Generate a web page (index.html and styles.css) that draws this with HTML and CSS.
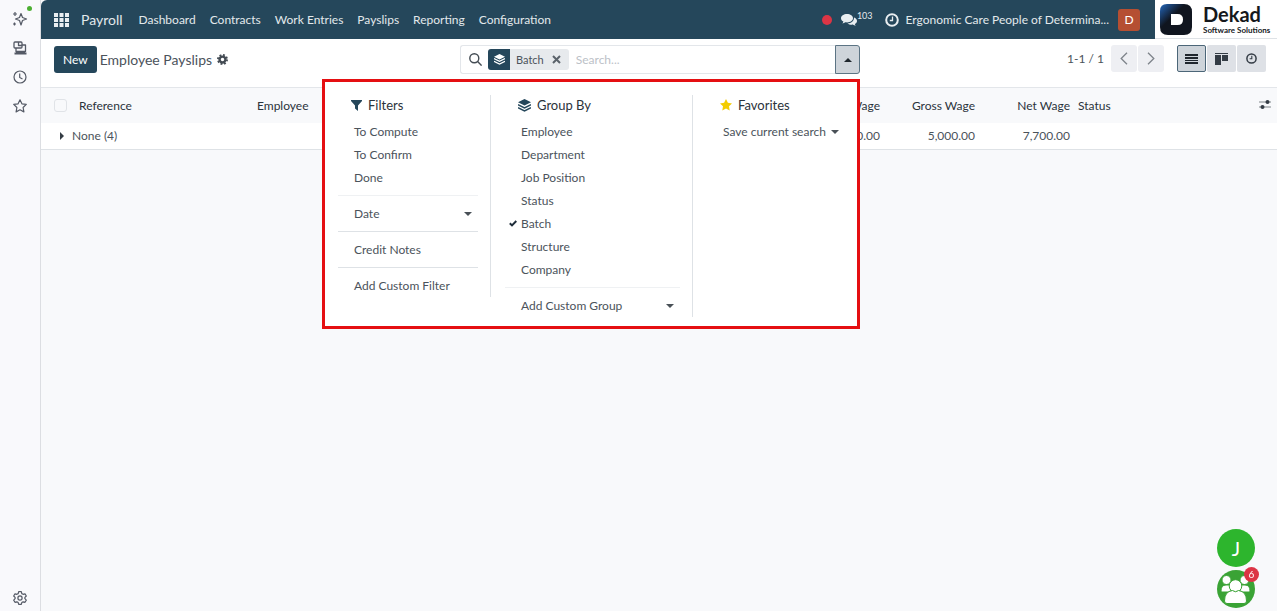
FILE: index.html
```html
<!DOCTYPE html>
<html lang="en">
<head>
  <meta charset="UTF-8">
  <meta name="viewport" content="width=device-width, initial-scale=1">
  <title>Employee Payslips - Payroll</title>
  <link rel="stylesheet" href="styles.css">
</head>
<body>

<aside class="sidebar">
  <button class="side-btn" aria-label="Assistant">
    <svg width="16" height="16" viewBox="0 0 16 16" fill="none" stroke="#555a66" stroke-width="1.2" stroke-linejoin="round"><path d="M9 2.5l1.5 4 4 1.5-4 1.5-1.5 4.500-1.500-4.500-4-1.500 4-1.500z"/><path d="M3 1v4M1 3h4M2.500 11.500v3M1 13h3"/></svg>
    <span class="online-dot"></span>
  </button>
  <button class="side-btn" aria-label="Apps">
    <svg width="16" height="16" viewBox="0 0 16 16" fill="none" stroke="#555a66" stroke-width="1.3" stroke-linejoin="round"><rect x="2" y="2" width="8" height="6" rx="1"/><path d="M6.500 2v3.500H10M10 5h3.500v6.500H4V8"/><path d="M2.500 13.500h12M4 12h9" stroke-width="1.800"/></svg>
  </button>
  <button class="side-btn" aria-label="History">
    <svg width="16" height="16" viewBox="0 0 16 16" fill="none" stroke="#555a66" stroke-width="1.200"><circle cx="8" cy="8" r="6"/><path d="M7.700 4.500v4l2.800 1.500"/></svg>
  </button>
  <button class="side-btn" aria-label="Favorites">
    <svg width="16" height="16" viewBox="0 0 16 16" fill="none" stroke="#555a66" stroke-width="1.200" stroke-linejoin="round"><path d="M8 1.800l1.900 4 4.400.6-3.200 3.100.8 4.400L8 11.800l-3.900 2.100.8-4.400L1.700 6.400l4.400-.6z"/></svg>
  </button>
  <button class="side-btn side-bottom" aria-label="Settings">
    <svg width="16" height="16" viewBox="0 0 16 16" fill="none" stroke="#555a66" stroke-width="1.200" stroke-linejoin="round"><circle cx="8" cy="8" r="2.100"/><path d="M6.700 1.700h2.600l.5 1.900 1.300.7 1.900-.5 1.300 2.200-1.400 1.400v1.300l1.400 1.400-1.300 2.200-1.900-.5-1.300.8-.5 1.800H6.700l-.5-1.800-1.300-.8-1.900.5-1.300-2.200 1.400-1.400V7.400L1.700 6l1.300-2.200 1.900.5 1.300-.7z"/></svg>
  </button>
</aside>

<div class="page">
  <header class="navbar">
    <button class="apps-btn" aria-label="Home menu">
      <svg width="15" height="14" viewBox="0 0 15 14" fill="#e9eef1"><path d="M0 0h4v4H0zM5.500 0h4v4h-4zM11 0h4v4h-4zM0 5h4v4H0zM5.500 5h4v4h-4zM11 5h4v4h-4zM0 10h4v4H0zM5.500 10h4v4h-4zM11 10h4v4h-4z"/></svg>
    </button>
    <a class="brand" href="#">Payroll</a>
    <nav class="menu">
      <a href="#">Dashboard</a>
      <a href="#">Contracts</a>
      <a href="#">Work Entries</a>
      <a href="#">Payslips</a>
      <a href="#">Reporting</a>
      <a href="#">Configuration</a>
    </nav>
    <div class="systray">
      <span class="record-dot"></span>
      <button class="chat-btn" aria-label="Messages">
        <svg width="16" height="14" viewBox="0 0 16 14" fill="#e9eef1"><path d="M6 1c3.300 0 6 1.900 6 4.200s-2.700 4.200-6 4.200c-.6 0-1.100 0-1.600-.1-.9.600-1.900 1-3 1.200.5-.5.900-1.200 1-1.900C1 7.800 0 6.600 0 5.200 0 2.900 2.700 1 6 1z"/><path d="M13 4.500c1.800.7 3 1.900 3 3.400 0 1.200-.9 2.300-2.200 3 .2.700.5 1.300 1 1.800-1.200-.1-2.200-.6-3-1.100-2 .2-4-.2-5.300-1.200 3.700 0 6.600-2.300 6.500-5.900z"/></svg><span class="chat-count">103</span>
      </button>
      <button class="clock-btn" aria-label="Activities">
        <svg width="14" height="14" viewBox="0 0 14 14" fill="none" stroke="#e9eef1"><circle cx="7" cy="7" r="5.800" stroke-width="2"/><path d="M7.500 3.500v4H4.800" stroke-width="1.300"/></svg>
      </button>
      <a class="company" href="#">Ergonomic Care People of Determina...</a>
      <button class="avatar">D</button>
    </div>
    <div class="logo">
      <svg width="32" height="31" viewBox="0 0 32 31"><defs><linearGradient id="mark" x1="0" y1="0" x2="1" y2="1"><stop offset="0" stop-color="#2468bd"/><stop offset=".4" stop-color="#10151f"/></linearGradient></defs><path d="M7 0h17q8 0 8 8v15q0 8-8 8H8q-8 0-8-8V7q0-7 7-7z" fill="url(#mark)"/><path d="M11 10h6.500q5.500 0 5.500 5.500T17.500 21H11z" fill="#fff"/></svg>
      <div class="logo-text">
        <strong>Dekad</strong>
        <small>Software Solutions</small>
      </div>
    </div>
  </header>

  <section class="control-panel">
    <div class="title-area">
      <button class="new-btn">New</button>
      <h1>Employee Payslips</h1>
      <button class="cog-btn" aria-label="Actions">
        <svg width="11" height="11" viewBox="0 0 12 12" fill="none" stroke="#444c54"><circle cx="6" cy="6" r="3.200" stroke-width="2.600"/><circle cx="6" cy="6" r="5" stroke-width="2" stroke-dasharray="2 1.927"/></svg>
      </button>
    </div>

    <div class="search">
      <div class="search-box">
        <svg width="13" height="13" viewBox="0 0 13 13" fill="none" stroke="#444c54" stroke-width="1.400"><circle cx="5.300" cy="5.300" r="4.500"/><path d="M8.600 8.600l4 4"/></svg>
        <span class="facet">
          <span class="facet-icon">
            <svg width="11" height="11" viewBox="0 0 12 12" fill="#fff"><path d="M6 0l6 3-6 3-6-3z"/><path d="M0 5l6 3 6-3M0 8l6 3 6-3" fill="none" stroke="#fff" stroke-width="1.300"/></svg>
          </span>
          <span class="facet-label">Batch</span>
          <button class="facet-remove" aria-label="Remove">
            <svg width="9" height="9" viewBox="0 0 9 9" fill="none" stroke="#5b636b" stroke-width="2"><path d="M1 1l7 7M8 1L1 8"/></svg>
          </button>
        </span>
        <input type="text" placeholder="Search..." aria-label="Search">
      </div>
      <button class="search-toggle" aria-label="Toggle search panel"><span class="caret-up"></span></button>

      <div class="search-menu">
        <div class="menu-col filters">
          <h2>
            <svg width="11" height="11" viewBox="0 0 11 11" fill="#25475b"><path d="M0 0h11v1L7 5.500V11L4 8.500v-3L0 1z"/></svg>
            Filters
          </h2>
          <button class="item">To Compute</button>
          <button class="item">To Confirm</button>
          <button class="item">Done</button>
          <hr class="soft">
          <button class="item">Date<span class="caret-down"></span></button>
          <hr>
          <button class="item">Credit Notes</button>
          <hr>
          <button class="item">Add Custom Filter</button>
        </div>
        <div class="menu-col group-by">
          <h2>
            <svg width="13" height="13" viewBox="0 0 12 12" fill="#25475b"><path d="M6 0l6 3-6 3-6-3z"/><path d="M0 5.200l6 3 6-3M0 8l6 3 6-3" fill="none" stroke="#25475b" stroke-width="1.300"/></svg>
            Group By
          </h2>
          <button class="item">Employee</button>
          <button class="item">Department</button>
          <button class="item">Job Position</button>
          <button class="item">Status</button>
          <button class="item selected">
            <svg class="check" width="8" height="7" viewBox="0 0 8 7" fill="none" stroke="#1f2d3a" stroke-width="2"><path d="M.8 3.200L3 5.400 7.300 1"/></svg>
            Batch
          </button>
          <button class="item">Structure</button>
          <button class="item">Company</button>
          <hr class="soft">
          <button class="item">Add Custom Group<span class="caret-down"></span></button>
        </div>
        <div class="menu-col favorites">
          <h2>
            <svg width="12" height="12" viewBox="0 0 12 12" fill="#f3cc00"><path d="M6 0l1.900 3.800 4.100.6-3 2.900.7 4.200L6 9.600l-3.700 1.900L3 7.300 0 4.400l4.100-.6z"/></svg>
            Favorites
          </h2>
          <button class="item">Save current search<span class="caret-down"></span></button>
        </div>
      </div>
    </div>

    <div class="view-area">
      <span class="pager">1-1 / 1</span>
      <div class="pager-btns">
        <button aria-label="Previous"><svg width="8" height="13" viewBox="0 0 8 13" fill="none" stroke="#7d838a" stroke-width="1.300"><path d="M7 .8L1.200 6.500 7 12.200"/></svg></button>
        <button aria-label="Next"><svg width="8" height="13" viewBox="0 0 8 13" fill="none" stroke="#7d838a" stroke-width="1.300"><path d="M1 .8l5.800 5.700L1 12.200"/></svg></button>
      </div>
      <div class="views">
        <button class="active" aria-label="List"><svg width="13" height="10" viewBox="0 0 13 10" fill="#1f262d"><path d="M0 0h13v2H0zM0 3h13v2H0zM0 6h13v1H0zM0 8h13v2H0z"/></svg></button>
        <button aria-label="Kanban"><svg width="13" height="12" viewBox="0 0 13 12" fill="#343c45"><path d="M0 0h13v1H0zM0 2h6v10H0zM7 2h6v6H7z"/></svg></button>
        <button aria-label="Activity"><svg width="11" height="11" viewBox="0 0 11 11" fill="none" stroke="#343c45"><circle cx="5.500" cy="5.500" r="4.600" stroke-width="1.500"/><path d="M5.800 2.800v3H3.600" stroke-width="1.100"/></svg></button>
      </div>
    </div>
  </section>

  <table class="payslips">
    <colgroup>
      <col class="c-check">
      <col class="c-ref">
      <col>
      <col class="c-basic">
      <col class="c-wage">
      <col class="c-wage">
      <col class="c-status">
      <col class="c-opt">
    </colgroup>
    <thead>
    <tr>
      <th class="check-cell"><input type="checkbox" aria-label="Select all"></th>
      <th>Reference</th>
      <th>Employee</th>
      <th class="num">Basic Wage</th>
      <th class="num">Gross Wage</th>
      <th class="num">Net Wage</th>
      <th>Status</th>
      <th class="opt-cell">
        <button aria-label="Optional columns"><svg width="12" height="11" viewBox="0 0 12 11" fill="#343c45"><path d="M0 2.500h12v1H0zM0 7.500h12v1H0z" opacity=".6"/><circle cx="8.500" cy="3" r="2"/><circle cx="3.500" cy="8" r="2"/></svg></button>
      </th>
    </tr>
    </thead>
    <tbody>
    <tr>
      <td colspan="3" class="group-name"><span class="caret-right"></span>None (4)</td>
      <td class="num">5,000.00</td>
      <td class="num">5,000.00</td>
      <td class="num">7,700.00</td>
      <td></td>
      <td></td>
    </tr>
    </tbody>
  </table>
</div>

<!-- Floating chat bubbles -->
<div class="chat-hub">
  <button class="bubble">J</button>
  <button class="bubble group" aria-label="Group chat">
    <svg width="37" height="37" viewBox="0 0 37 37" fill="#fff" stroke="#3aa335" stroke-width="1"><circle cx="9.500" cy="9" r="4.500"/><circle cx="27.500" cy="9" r="4.500"/><path d="M4 20q0-6 5-6h5v7H5q-1 0-1-1zM33 20q0-6-5-6h-5v7h9q1 0 1-1z"/><circle cx="18.500" cy="15" r="6.300"/><path d="M7.500 30q0-9.500 8-10.500 3 2.500 6 0 8 1 8 10.500 0 2.500-2.500 2.500H10q-2.500 0-2.500-2.500z"/></svg>
    <span class="badge">6</span>
  </button>
</div>

</body>
</html>
```
FILE: styles.css
```css
* {
  margin: 0;
  padding: 0;
  box-sizing: border-box;
}

body {
  display: flex;
  min-height: 100vh;
  font-family: Lato, "Open Sans", sans-serif;
  font-size: 12px;
  line-height: 18px;
  color: #4b535b;
  background-color: #f8f9fb;
}

button {
  font: inherit;
  color: inherit;
  background: none;
  border: none;
  cursor: pointer;
}

a {
  color: inherit;
  text-decoration: none;
}

svg {
  display: block;
  flex-shrink: 0;
}

/* Sidebar */
.sidebar {
  display: flex;
  flex-direction: column;
  align-items: center;
  gap: 13px;
  width: 41px;
  flex-shrink: 0;
  padding: 11px 1px 5px 0;
  background-color: #f9f9fc;
  border-right: 1px solid #dcdee2;
}

.side-btn {
  position: relative;
}

.side-bottom {
  margin-top: auto;
}

.online-dot {
  position: absolute;
  top: -5px;
  right: -4px;
  width: 5px;
  height: 5px;
  border-radius: 50%;
  background-color: #4caf32;
}

.page {
  flex: 1;
  min-width: 0;
}

/* Navbar */
.navbar {
  display: flex;
  align-items: center;
  height: 39px;
  background-color: #25475b;
  border-top-left-radius: 6px;
  color: #e3e9ec;
}

.apps-btn {
  margin: 0 12px 0 13px;
}

.brand {
  font-size: 14px;
}

.menu {
  display: flex;
  gap: 14px;
  margin-left: 16px;
}

.systray {
  display: flex;
  align-items: center;
  margin-left: auto;
}

.record-dot {
  width: 10px;
  height: 10px;
  border-radius: 50%;
  background-color: #dc3545;
}

.chat-btn {
  display: flex;
  align-items: center;
  margin-left: 9px;
}

.chat-count {
  font-size: 9px;
  line-height: 10px;
  padding-bottom: 8px;
}

.clock-btn {
  margin: 0 7px 0 12px;
}

.avatar {
  width: 22px;
  height: 22px;
  margin: 0 15px 0 9px;
  border-radius: 3px;
  background-color: #b54f32;
  color: #fff;
}

.logo {
  display: flex;
  align-items: center;
  gap: 11px;
  align-self: stretch;
  width: 122px;
  padding-left: 5px;
  background-color: #fff;
  border-bottom: 1px solid #dee2e6;
  color: #15181c;
  white-space: nowrap;
}

.logo-text {
  display: flex;
  flex-direction: column;
}

.logo-text strong {
  font-size: 20px;
  line-height: 22px;
}

.logo-text small {
  font-size: 8px;
  font-weight: 700;
  line-height: 10px;
}

/* Control panel */
.control-panel {
  display: grid;
  grid-template-columns: 1fr minmax(200px, 400px) 1fr;
  align-items: start;
  height: 49px;
  padding: 6px 11px 0 13px;
  background-color: #fff;
  border-bottom: 1px solid #e3e6ea;
}

.title-area {
  display: flex;
  align-items: center;
  padding-top: 1px;
}

.new-btn {
  height: 27px;
  padding: 0 9px;
  border-radius: 3px;
  background-color: #25475b;
  color: #fff;
}

h1 {
  margin: 0 5px 0 3px;
  font-size: 14px;
  font-weight: 400;
}

.search {
  position: relative;
  display: flex;
  height: 29px;
}

.search-box {
  display: flex;
  align-items: center;
  flex: 1;
  padding-left: 8px;
  border: 1px solid #e3e6ea;
  border-right: none;
  border-radius: 3px 0 0 3px;
}

.facet {
  display: flex;
  align-items: center;
  height: 21px;
  margin: 0 7px 0 6px;
  padding-right: 8px;
  border-radius: 3px;
  background-color: #e7eaed;
  overflow: hidden;
  font-size: 11px;
}

.facet-icon {
  display: flex;
  align-items: center;
  height: 21px;
  padding: 0 5px 0 6px;
  background-color: #25475b;
}

.facet-label {
  margin: 0 8px 0 6px;
}

.search-box input {
  flex: 1;
  min-width: 0;
  border: none;
  outline: none;
  font: inherit;
}

.search-box input::placeholder {
  color: #bcc1c7;
}

.search-toggle {
  display: flex;
  align-items: center;
  justify-content: center;
  width: 25px;
  border: 1px solid #5c7484;
  border-radius: 0 3px 3px 0;
  background-color: #ced4da;
}

.caret-up {
  border: 4px solid transparent;
  border-top: none;
  border-bottom-color: #1f262d;
}

.caret-down {
  border: 4px solid transparent;
  border-bottom: none;
  border-top-color: #495057;
}

.caret-right {
  display: inline-block;
  margin: 0 8px 0 16px;
  border: 4px solid transparent;
  border-right: none;
  border-left-color: #343c45;
}

/* Search dropdown */
.search-menu {
  position: absolute;
  top: 34px;
  right: 0;
  z-index: 5;
  display: flex;
  align-items: flex-start;
  width: 538px;
  padding: 13px 0 9px;
  border: 3px solid #e50f12;
  background-color: #fff;
}

.menu-col {
  display: flex;
  flex-direction: column;
  padding: 0 12px 0 13px;
}

.filters {
  width: 166px;
  border-right: 1px solid #dee2e6;
}

.group-by {
  width: 202px;
  border-right: 1px solid #dee2e6;
}

.favorites {
  flex: 1;
}

.group-by,
.favorites {
  padding-left: 14px;
}

h2 {
  display: flex;
  align-items: center;
  gap: 6px;
  margin-bottom: 5px;
  padding-left: 13px;
  font-size: 13px;
  font-weight: 400;
  line-height: 20px;
  color: #2b333b;
}

.item {
  position: relative;
  display: flex;
  align-items: center;
  justify-content: space-between;
  padding: 0 6px 0 16px;
  line-height: 23px;
  text-align: left;
  white-space: nowrap;
}

.check {
  position: absolute;
  left: 4px;
  top: 8px;
}

hr {
  margin: 6px 0;
  border: none;
  border-top: 1px solid #dee2e6;
}

hr.soft {
  border-top-color: #eff1f3;
}

/* Pager and view switcher */
.view-area {
  display: flex;
  align-items: center;
  justify-content: flex-end;
  height: 27px;
}

.pager {
  margin-right: 7px;
}

.pager-btns {
  display: flex;
  gap: 1px;
  height: 27px;
  margin-right: 13px;
}

.pager-btns button,
.views button {
  display: flex;
  align-items: center;
  justify-content: center;
}

.pager-btns button {
  width: 26px;
  border-radius: 3px;
  background-color: #eeeff3;
}

.views {
  display: flex;
  gap: 1px;
  height: 27px;
}

.views button {
  width: 29px;
  border-radius: 2px;
  background-color: #dee1e6;
}

.views .active {
  border: 1px solid #4c6678;
  background-color: #ced4da;
}

/* List */
.payslips {
  width: 100%;
  table-layout: fixed;
  border-collapse: collapse;
  background-color: #fff;
}

.c-check {
  width: 34px;
}

.c-ref {
  width: 178px;
}

.c-basic {
  width: 100px;
}

.c-wage {
  width: 95px;
}

.c-status {
  width: 181px;
}

.c-opt {
  width: 22px;
}

th, td {
  padding: 0 4px;
  text-align: left;
  font-weight: 400;
  white-space: nowrap;
}

th {
  height: 35px;
  background-color: #f8f9fb;
  color: #2b333b;
}

td {
  height: 26px;
  border-bottom: 1px solid #dee2e6;
}

.num {
  text-align: right;
}

.check-cell {
  padding-left: 13px;
}

.check-cell input {
  display: block;
  appearance: none;
  width: 13px;
  height: 13px;
  border: 1px solid #e0e3e7;
  border-radius: 3px;
}

.group-name {
  padding-left: 3px;
}

/* Chat bubbles */
.chat-hub {
  position: fixed;
  right: 22px;
  bottom: 3px;
  display: flex;
  flex-direction: column;
  gap: 3px;
}

.bubble {
  position: relative;
  width: 38px;
  height: 38px;
  border-radius: 50%;
  background-color: #2db52d;
  color: #fff;
  font-size: 20px;
}

.bubble.group {
  background-color: #3aa335;
}

.badge {
  position: absolute;
  top: -3px;
  right: -4px;
  width: 15px;
  height: 15px;
  border-radius: 50%;
  background-color: #dc3545;
  font-size: 10px;
  line-height: 15px;
}
```
